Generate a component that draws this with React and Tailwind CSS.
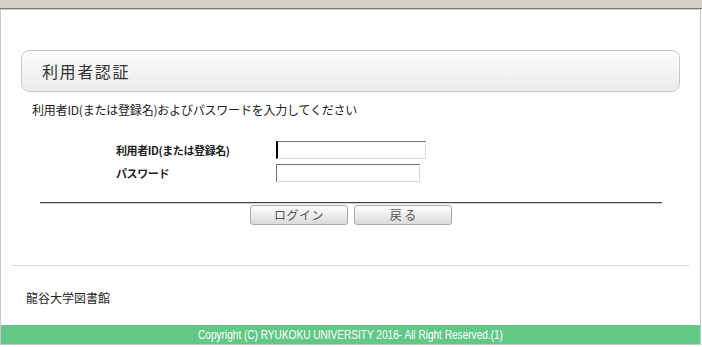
const jp = "font-['Noto_Sans_CJK_JP','Noto_Sans',sans-serif]"

const LoginPage = () => {
  return (
    <div className={`w-[702px] h-[347px] bg-white overflow-hidden ${jp}`}>
      <div className="h-[9px] bg-[#d4d0c8] border-b border-[#7c7c7c]" />
      <div className="w-[701px] border border-[#c8c8c8]">
        <div className="pt-[40px]">
          <div className="ml-[20px] w-[659px] h-[42px] rounded-[8px] border border-[#c9c9c9] bg-gradient-to-b from-[#fcfcfc] to-[#ebebeb] flex items-center pl-[20px]">
            <span className="text-[16px] tracking-[1.6px] text-[#333] leading-none">利用者認証</span>
          </div>

          <p className="mt-[10px] pl-[31px] text-[12px] leading-[16px] tracking-[-0.2px] text-[#222]">
            利用者ID(または登録名)およびパスワードを入力してください
          </p>

          <div className="mt-[23px] pl-[115px] grid grid-cols-[160px_auto] gap-y-[5px] items-center">
            <label className="text-[11px] font-bold text-[#222] tracking-[-0.4px]">利用者ID(または登録名)</label>
            <div className="w-[150px] h-[18px] border border-t-[#6f6f6f] border-l-black border-l-2 border-r-[#d8d8d8] border-b-[#d8d8d8] bg-white" />
            <label className="text-[11px] font-bold text-[#222] tracking-[-0.4px]">パスワード</label>
            <div className="w-[144px] h-[18px] border border-t-[#6f6f6f] border-l-[#6f6f6f] border-r-[#d8d8d8] border-b-[#d8d8d8] bg-white" />
          </div>

          <div className="mt-[20px] ml-[39px] w-[622px] h-px bg-[#444]" />
          <div className="ml-[39px] w-[622px] h-px bg-[#d0d0d0]" />

          <div className="mt-[1px] flex justify-center gap-[6px] pl-[1px]">
            <button className="w-[98px] h-[20px] rounded-[3px] border border-[#a9a9a9] bg-gradient-to-b from-[#fdfdfd] to-[#dcdcdc] text-[12px] text-[#555] leading-none tracking-[0.5px]">
              ログイン
            </button>
            <button className="w-[98px] h-[20px] rounded-[3px] border border-[#a9a9a9] bg-gradient-to-b from-[#fdfdfd] to-[#dcdcdc] text-[12px] text-[#555] leading-none">
              戻 る
            </button>
          </div>

          <div className="mt-[40px] mx-[10px] h-px bg-[#dcdcdc]" />

          <p className="mt-[24px] pl-[25px] text-[12px] leading-[16px] text-[#222]">龍谷大学図書館</p>

          <div className="mt-[19px] h-[19px] bg-[#62c886] flex items-center justify-center overflow-hidden">
            <span className="inline-block scale-x-[0.84] font-['Liberation_Sans',sans-serif] text-[12px] leading-none text-white whitespace-nowrap">
              Copyright (C) RYUKOKU UNIVERSITY 2016- All Right Reserved.(1)
            </span>
          </div>
        </div>
      </div>
    </div>
  )
}

export default LoginPage
